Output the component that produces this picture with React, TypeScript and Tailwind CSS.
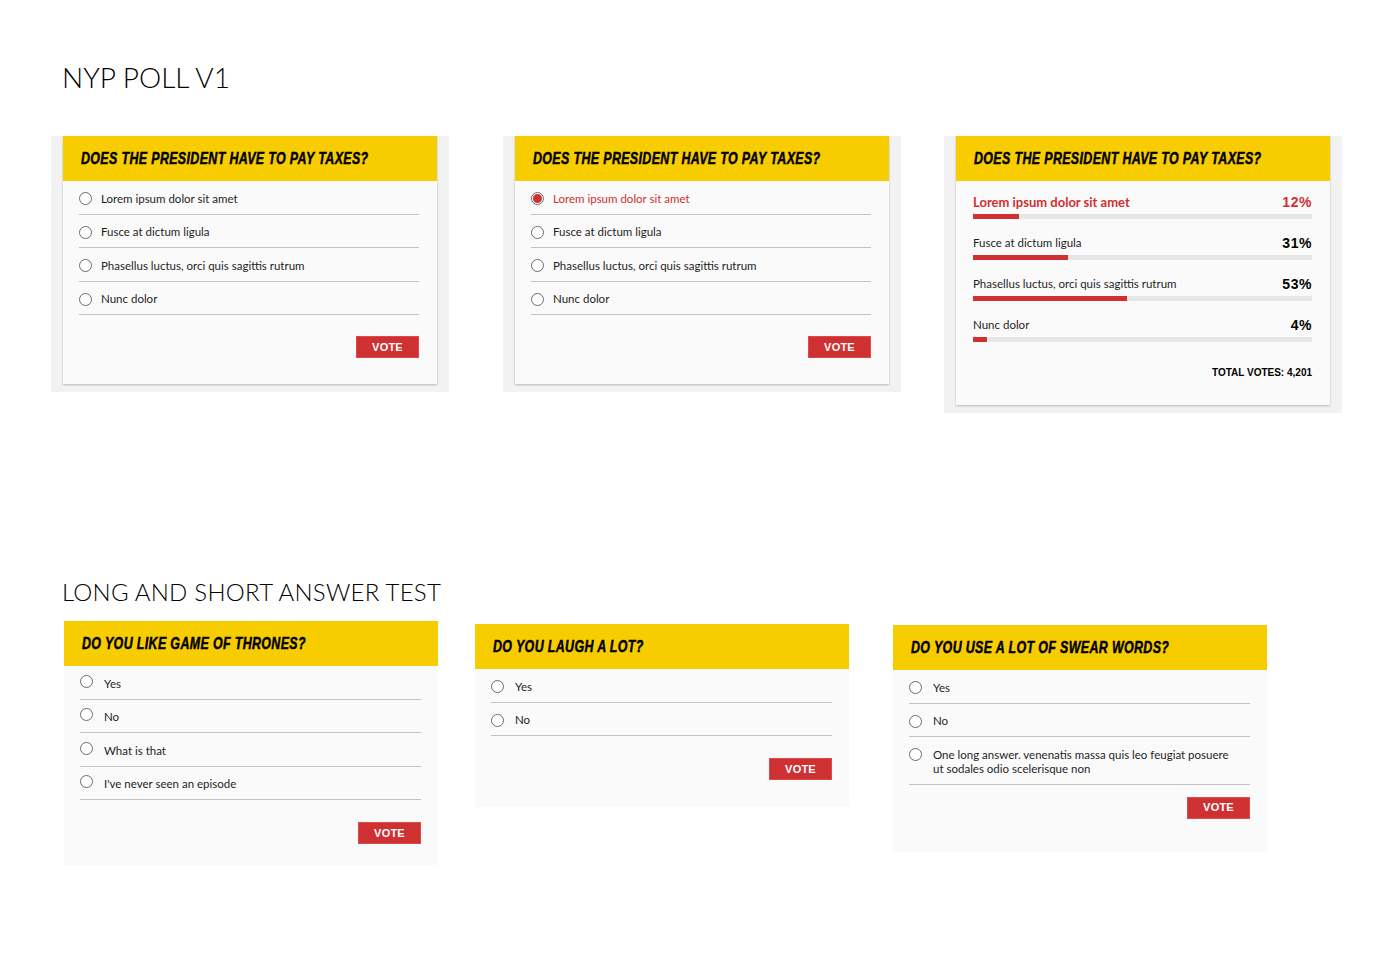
import React from "react";

const taxQuestion = "Does the president have to pay taxes?";

const taxOptions = [
  "Lorem ipsum dolor sit amet",
  "Fusce at dictum ligula",
  "Phasellus luctus, orci quis sagittis rutrum",
  "Nunc dolor",
];

// bar = filled share of the track, pct = label shown on the right
const taxResults = [
  { label: "Lorem ipsum dolor sit amet", pct: 12, bar: 13.6, mine: true },
  { label: "Fusce at dictum ligula", pct: 31, bar: 28.1, mine: false },
  { label: "Phasellus luctus, orci quis sagittis rutrum", pct: 53, bar: 45.3, mine: false },
  { label: "Nunc dolor", pct: 4, bar: 4.1, mine: false },
];

function PollHeader({ title }: { title: string }) {
  return (
    <div className="h-[45px] bg-[#f8cd00] flex items-center pl-[18px] overflow-hidden">
      <h3 className="block whitespace-nowrap origin-left scale-x-[0.73] font-['Liberation_Sans',sans-serif] text-[17px] font-bold italic uppercase text-black tracking-[0.03em] [-webkit-text-stroke:0.5px_black]">
        {title}
      </h3>
    </div>
  );
}

function Radio({ checked = false, className = "" }: { checked?: boolean; className?: string }) {
  return (
    <span
      className={`shrink-0 w-[13px] h-[13px] rounded-full border border-[#6b6b6b] bg-white flex items-center justify-center ${className}`}
    >
      {checked && <span className="w-[9px] h-[9px] rounded-full bg-[#cf3133]" />}
    </span>
  );
}

function OptionRow({
  label,
  checked = false,
  gap = "gap-[9px]",
  radioOffset = "mt-[0.5px]",
}: {
  label: string;
  checked?: boolean;
  gap?: string;
  radioOffset?: string;
}) {
  return (
    <div className={`flex items-start ${gap} pt-[10.5px] pb-[8px] border-b border-[#c2c2c2]`}>
      <Radio checked={checked} className={radioOffset} />
      <span
        className={`max-w-[300px] text-[11.5px] leading-[14px] ${
          checked ? "text-[#cf3133]" : "text-[#1e1e1e]"
        }`}
      >
        {label}
      </span>
    </div>
  );
}

function VoteButton({ className = "" }: { className?: string }) {
  return (
    <div className={`flex justify-end ${className}`}>
      <button className="w-[63px] h-[22px] bg-[#cf3133] border border-[#dc4a4a] text-white text-[11px] font-bold font-['Liberation_Sans',sans-serif] tracking-[0.02em] flex items-center justify-center">
        VOTE
      </button>
    </div>
  );
}

// grey backdrop with the raised card inside, used on the first row
function Framed({ children, className = "" }: { children: React.ReactNode; className?: string }) {
  return (
    <div className={`w-[398px] bg-[#f2f2f2] px-[12px] pb-[8px] ${className}`}>
      <div className="bg-[#fafafa] shadow-[0_1px_2px_rgba(0,0,0,0.25)]">{children}</div>
    </div>
  );
}

function VoteCard({ selected }: { selected?: number }) {
  return (
    <>
      <PollHeader title={taxQuestion} />
      <div className="pl-[16px] pr-[18px] pb-[26px]">
        {taxOptions.map((o, i) => (
          <OptionRow key={o} label={o} checked={i === selected} />
        ))}
        <VoteButton className="mt-[21px]" />
      </div>
    </>
  );
}

function ResultsCard() {
  return (
    <>
      <PollHeader title={taxQuestion} />
      <div className="pl-[17px] pr-[18px] pb-[26px]">
        {taxResults.map((r, i) => (
          <div key={r.label} className={i === 0 ? "pt-[13px]" : "pt-[16px]"}>
            <div className="flex items-center justify-between leading-[16px]">
              <span
                className={
                  r.mine
                    ? "text-[13px] font-bold text-[#cf3133]"
                    : "text-[11.5px] text-[#1e1e1e]"
                }
              >
                {r.label}
              </span>
              <span
                className={`text-[14px] font-bold font-['Liberation_Sans',sans-serif] tracking-[0.04em] ${
                  r.mine ? "text-[#cf3133]" : "text-black"
                }`}
              >
                {r.pct}%
              </span>
            </div>
            <div className="mt-[4px] h-[5px] bg-[#e6e6e6]">
              <div className="h-full bg-[#cf3133]" style={{ width: `${r.bar}%` }} />
            </div>
          </div>
        ))}
        <p className="mt-[25px] text-right text-[10px] leading-[12px] font-bold font-['Liberation_Sans',sans-serif] text-black">
          TOTAL VOTES: 4,201
        </p>
      </div>
    </>
  );
}

function PlainPoll({
  title,
  options,
  className = "",
  radioOffset,
  buttonGap,
  bottom,
}: {
  title: string;
  options: string[];
  className?: string;
  radioOffset?: string;
  buttonGap: string;
  bottom: string;
}) {
  return (
    <div className={`w-[374px] bg-[#fafafa] ${className}`}>
      <PollHeader title={title} />
      <div className={`pl-[16px] pr-[17px] ${bottom}`}>
        {options.map((o) => (
          <OptionRow key={o} label={o} gap="gap-[11px]" radioOffset={radioOffset} />
        ))}
        <VoteButton className={buttonGap} />
      </div>
    </div>
  );
}

export default function App() {
  return (
    <div className="min-h-screen bg-white font-['Lato',sans-serif] text-[#1e1e1e]">
      <section className="pt-[63px]">
        <h1 className="ml-[62px] text-[28px] leading-none font-light text-black">
          NYP POLL V1
        </h1>
        <div className="mt-[45px] flex items-start pl-[51px]">
          <Framed>
            <VoteCard />
          </Framed>
          <Framed className="ml-[54px]">
            <VoteCard selected={0} />
          </Framed>
          <Framed className="ml-[43px]">
            <ResultsCard />
          </Framed>
        </div>
      </section>

      <section className="mt-[167px] pb-[80px]">
        <h2 className="ml-[62px] text-[24px] leading-none font-light text-black tracking-[0.01em]">
          LONG AND SHORT ANSWER TEST
        </h2>
        <div className="mt-[17px] flex items-start pl-[64px]">
          <PlainPoll
            title="Do you like Game of Thrones?"
            options={["Yes", "No", "What is that", "I've never seen an episode"]}
            radioOffset="-mt-[2px]"
            buttonGap="mt-[22px]"
            bottom="pb-[21px]"
          />
          <PlainPoll
            title="Do you laugh a lot?"
            options={["Yes", "No"]}
            className="ml-[37px] mt-[3px]"
            buttonGap="mt-[22px]"
            bottom="pb-[27px]"
          />
          <PlainPoll
            title="Do you use a lot of swear words?"
            options={[
              "Yes",
              "No",
              "One long answer. venenatis massa quis leo feugiat posuere ut sodales odio scelerisque non",
            ]}
            className="ml-[44px] mt-[4px]"
            buttonGap="mt-[12px]"
            bottom="pb-[33px]"
          />
        </div>
      </section>
    </div>
  );
}
